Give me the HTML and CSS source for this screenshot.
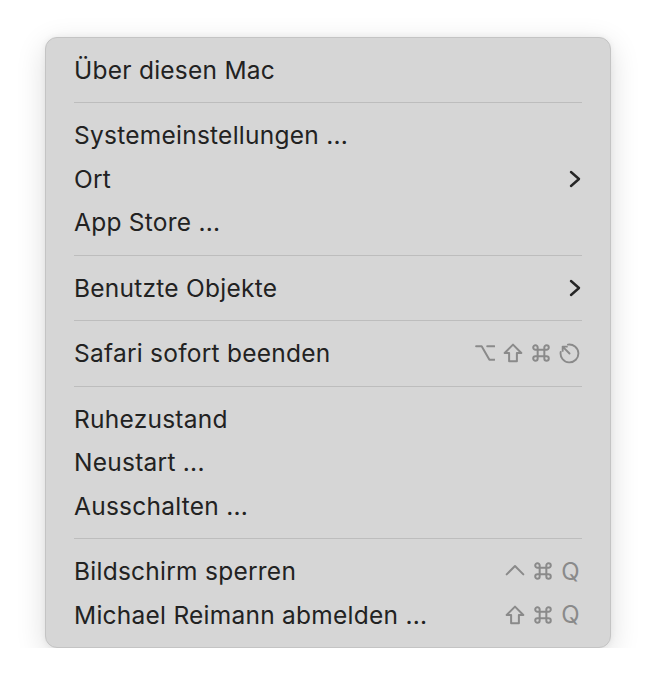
FILE: index.html
```html
<!DOCTYPE html>
<html lang="de">
<head>
    <meta charset="UTF-8">
    <meta name="viewport" content="width=device-width, initial-scale=1.0">
    <title>Apple-Menü</title>
    <link rel="stylesheet" href="styles.css">
</head>
<body>

<div class="menu">
    <div class="menu-item">Über diesen Mac</div>

    <div class="separator"></div>

    <div class="menu-item">Systemeinstellungen ...</div>
    <div class="menu-item">
        <span>Ort</span>
        <svg class="chevron" viewBox="0 0 14 18"><path d="M3 2 L11 9 L3 16"/></svg>
    </div>
    <div class="menu-item">App Store ...</div>

    <div class="separator"></div>

    <div class="menu-item">
        <span>Benutzte Objekte</span>
        <svg class="chevron" viewBox="0 0 14 18"><path d="M3 2 L11 9 L3 16"/></svg>
    </div>

    <div class="separator"></div>

    <div class="menu-item">
        <span>Safari sofort beenden</span>
        <span class="shortcut">
            <!-- option -->
            <svg class="key" viewBox="0 0 18 18"><path d="M1 3h5l7 12h4.5M11 3h6.5"/></svg>
            <!-- shift -->
            <svg class="key" viewBox="0 0 18 18"><path d="M9 1.5 L1.5 9 H5.5 V16.5 H12.5 V9 H16.5 Z"/></svg>
            <!-- command -->
            <svg class="key" viewBox="0 0 18 18"><path d="M6 6H4a2 2 0 1 1 2-2v10a2 2 0 1 1-2-2h10a2 2 0 1 1-2 2V4a2 2 0 1 1 2 2H6z"/></svg>
            <!-- escape -->
            <svg class="key wide" viewBox="0 0 20 20"><path d="M8.5 1.6A8.5 8.5 0 1 1 1.6 8.5M3.5 7.5V3.5H7.5M3.5 3.5L10 10"/></svg>
        </span>
    </div>

    <div class="separator"></div>

    <div class="menu-item">Ruhezustand</div>
    <div class="menu-item">Neustart ...</div>
    <div class="menu-item">Ausschalten ...</div>

    <div class="separator"></div>

    <div class="menu-item">
        <span>Bildschirm sperren</span>
        <span class="shortcut">
            <svg class="key" viewBox="0 0 18 18"><path d="M1.5 12 L9 4.5 L16.5 12"/></svg>
            <svg class="key" viewBox="0 0 18 18"><path d="M6 6H4a2 2 0 1 1 2-2v10a2 2 0 1 1-2-2h10a2 2 0 1 1-2 2V4a2 2 0 1 1 2 2H6z"/></svg>
            <span class="key-letter">Q</span>
        </span>
    </div>
    <div class="menu-item">
        <span>Michael Reimann abmelden ...</span>
        <span class="shortcut">
            <svg class="key" viewBox="0 0 18 18"><path d="M9 1.5 L1.5 9 H5.5 V16.5 H12.5 V9 H16.5 Z"/></svg>
            <svg class="key" viewBox="0 0 18 18"><path d="M6 6H4a2 2 0 1 1 2-2v10a2 2 0 1 1-2-2h10a2 2 0 1 1-2 2V4a2 2 0 1 1 2 2H6z"/></svg>
            <span class="key-letter">Q</span>
        </span>
    </div>
</div>

</body>
</html>
```

FILE: styles.css
```css
body {
    margin: 0;
    padding: 37px 0 0 45px;
    background-color: #ffffff;
    font-family: Inter, "Noto Sans", sans-serif;
}
.menu {
    width: 566px;
    box-sizing: border-box;
    padding: 10px 0 10px 0;
    background-color: #d6d6d6;
    border: 1px solid #c4c4c4;
    border-radius: 12px;
    box-shadow: 0 8px 30px rgba(0, 0, 0, 0.14), 0 0 6px rgba(0, 0, 0, 0.06);
}
.menu-item {
    display: flex;
    align-items: center;
    justify-content: space-between;
    height: 43.5px;
    padding: 0 30px 0 28px;
    font-size: 24.5px;
    letter-spacing: 0.25px;
    color: #222222;
}
.separator {
    height: 1px;
    margin: 10.5px 28px 10.5px 28px;
    background-color: #bdbdbd;
}
.chevron {
    width: 14px;
    height: 18px;
    margin-right: -2px;
    fill: none;
    stroke: #262626;
    stroke-width: 2.4;
    stroke-linecap: round;
    stroke-linejoin: round;
}
.shortcut {
    display: flex;
    align-items: center;
    gap: 8px;
}
.key {
    width: 20px;
    height: 20px;
    fill: none;
    stroke: #8a8a8a;
    stroke-width: 1.8;
    stroke-linecap: round;
    stroke-linejoin: round;
}
.key.wide {
    width: 21px;
    height: 21px;
}
.key-letter {
    font-size: 24px;
    letter-spacing: 0;
    color: #8a8a8a;
    width: 19px;
    text-align: center;
}
```
